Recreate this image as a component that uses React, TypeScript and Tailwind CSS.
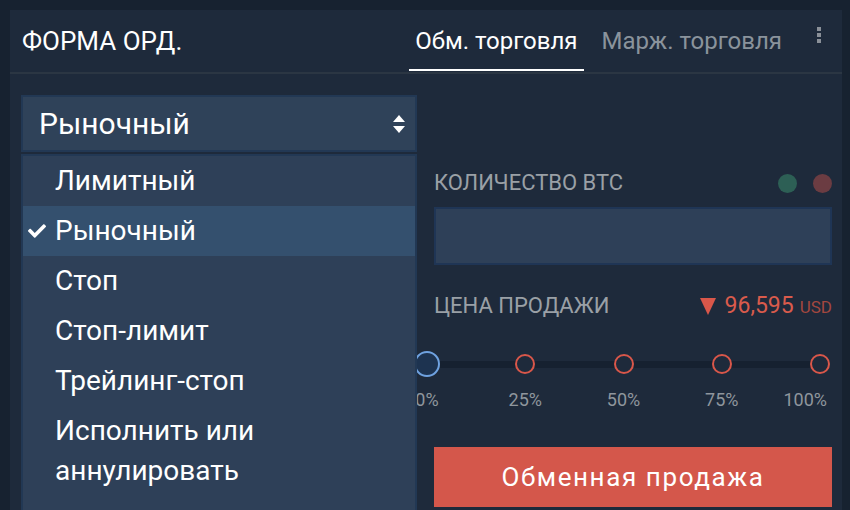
import { FaCheck } from "react-icons/fa";

const ORDER_TYPES = [
  "Лимитный",
  "Рыночный",
  "Стоп",
  "Стоп-лимит",
  "Трейлинг-стоп",
  "Исполнить или аннулировать",
];

const STEPS = ["0%", "25%", "50%", "75%", "100%"];

const SortArrows = () => (
  <svg width="14" height="20" viewBox="0 0 14 20" className="text-white">
    <path d="M7 1 L13 8 H1 Z" fill="currentColor" />
    <path d="M7 19 L13 12 H1 Z" fill="currentColor" />
  </svg>
);

const App = () => {
  const selected = "Рыночный";

  return (
    <div className="h-[510px] overflow-hidden bg-[#172230] pt-[10px] pl-[10px] pr-[8px] font-['Roboto',sans-serif]">
      <div className="h-[520px] bg-[#1e2a3b]">
        {/* Header */}
        <div className="flex h-[64px] items-stretch border-b-2 border-[#2b3643] pl-[12px] pr-[21px]">
          <h1 className="flex items-center text-[26px] text-white">ФОРМА ОРД.</h1>
          <div className="ml-auto flex items-stretch">
            <button className="relative flex items-center px-[6px] text-[24px] text-white">
              Обм. торговля
              <span className="absolute bottom-[1px] left-0 right-0 h-[2px] bg-white" />
            </button>
            <button className="ml-[18px] flex items-center text-[24px] text-[#8a939c]">
              Марж. торговля
            </button>
            <div className="ml-[35px] flex flex-col gap-[2px] pt-[17px]">
              <span className="h-[4px] w-[4px] bg-[#8a9098]" />
              <span className="h-[4px] w-[4px] bg-[#8a9098]" />
              <span className="h-[4px] w-[4px] bg-[#8a9098]" />
            </div>
          </div>
        </div>

        {/* Body */}
        <div className="flex gap-[17px] pl-[11px] pr-[10px] pt-[21px]">
          {/* Order type select */}
          <div className="relative w-[396px] shrink-0">
            <div className="flex h-[57px] items-center justify-between border-2 border-[#223854] bg-[#2f4259] pl-[16px] pr-[9px]">
              <span className="text-[30px] text-white">{selected}</span>
              <SortArrows />
            </div>
            <ul className="absolute left-0 right-0 top-[59px] z-10 h-[400px] border-2 border-[#223854] bg-[#2e4058]">
              {ORDER_TYPES.map((type) => (
                <li
                  key={type}
                  className={`flex items-start py-[5px] pl-[5px] pr-[20px] text-[28px] leading-[40px] text-white ${
                    type === selected ? "bg-[#34506e]" : ""
                  }`}
                >
                  <span className="flex h-[40px] w-[27px] shrink-0 items-center">
                    {type === selected && <FaCheck className="h-[18px] w-[18px]" />}
                  </span>
                  <span>{type}</span>
                </li>
              ))}
            </ul>
          </div>

          {/* Order form */}
          <div className="flex-1 pt-[75px]">
            <div className="flex h-[26px] items-center justify-between">
              <span className="text-[22px] leading-[26px] text-[#9aa0a6]">КОЛИЧЕСТВО BTC</span>
              <div className="flex gap-[16px]">
                <span className="h-[19px] w-[19px] rounded-full bg-[#2d5f55]" />
                <span className="h-[19px] w-[19px] rounded-full bg-[#6b3c42]" />
              </div>
            </div>
            <input className="mt-[11px] block h-[58px] w-full border-2 border-[#1f3555] bg-[#2e4058] outline-none" />

            <div className="mt-[28px] flex h-[26px] items-center justify-between">
              <span className="text-[22px] leading-[26px] text-[#9aa0a6]">ЦЕНА ПРОДАЖИ</span>
              <div className="flex items-baseline">
                <svg width="16" height="17" viewBox="0 0 16 17" className="mr-[9px] self-center">
                  <path d="M0 0 H16 L8 17 Z" fill="#d9574a" />
                </svg>
                <span className="text-[23px] leading-[26px] text-[#d95b4c]">96,595</span>
                <span className="ml-[6px] text-[17px] leading-[26px] text-[#a2473f]">USD</span>
              </div>
            </div>

            {/* Percent slider */}
            <div className="relative ml-[-20px] mr-[-1px] mt-[32px]">
              <div className="absolute left-[13px] right-[13px] top-[10px] h-[7px] bg-[#162130]" />
              <div className="relative flex justify-between">
                {STEPS.map((step, i) => (
                  <div key={step} className="flex w-[26px] flex-col items-center">
                    <span className="flex h-[26px] items-center">
                      {i === 0 ? (
                        <span className="h-[26px] w-[26px] rounded-full border-2 border-[#6fa2e0] bg-[#1d3350]" />
                      ) : (
                        <span className="h-[20px] w-[20px] rounded-full border-2 border-[#d9574a] bg-[#1e2a3b]" />
                      )}
                    </span>
                    <span
                      className={`mt-[12px] whitespace-nowrap text-[18px] leading-[22px] text-[#8f969d] ${
                        i === STEPS.length - 1 ? "mr-[6px] self-end" : ""
                      }`}
                    >
                      {step}
                    </span>
                  </div>
                ))}
              </div>
            </div>

            <button className="mt-[36px] flex h-[60px] w-full items-center justify-center bg-[#d4574b] text-[26px] tracking-[1.6px] text-white">
              Обменная продажа
            </button>
          </div>
        </div>
      </div>
    </div>
  );
};

export default App;
